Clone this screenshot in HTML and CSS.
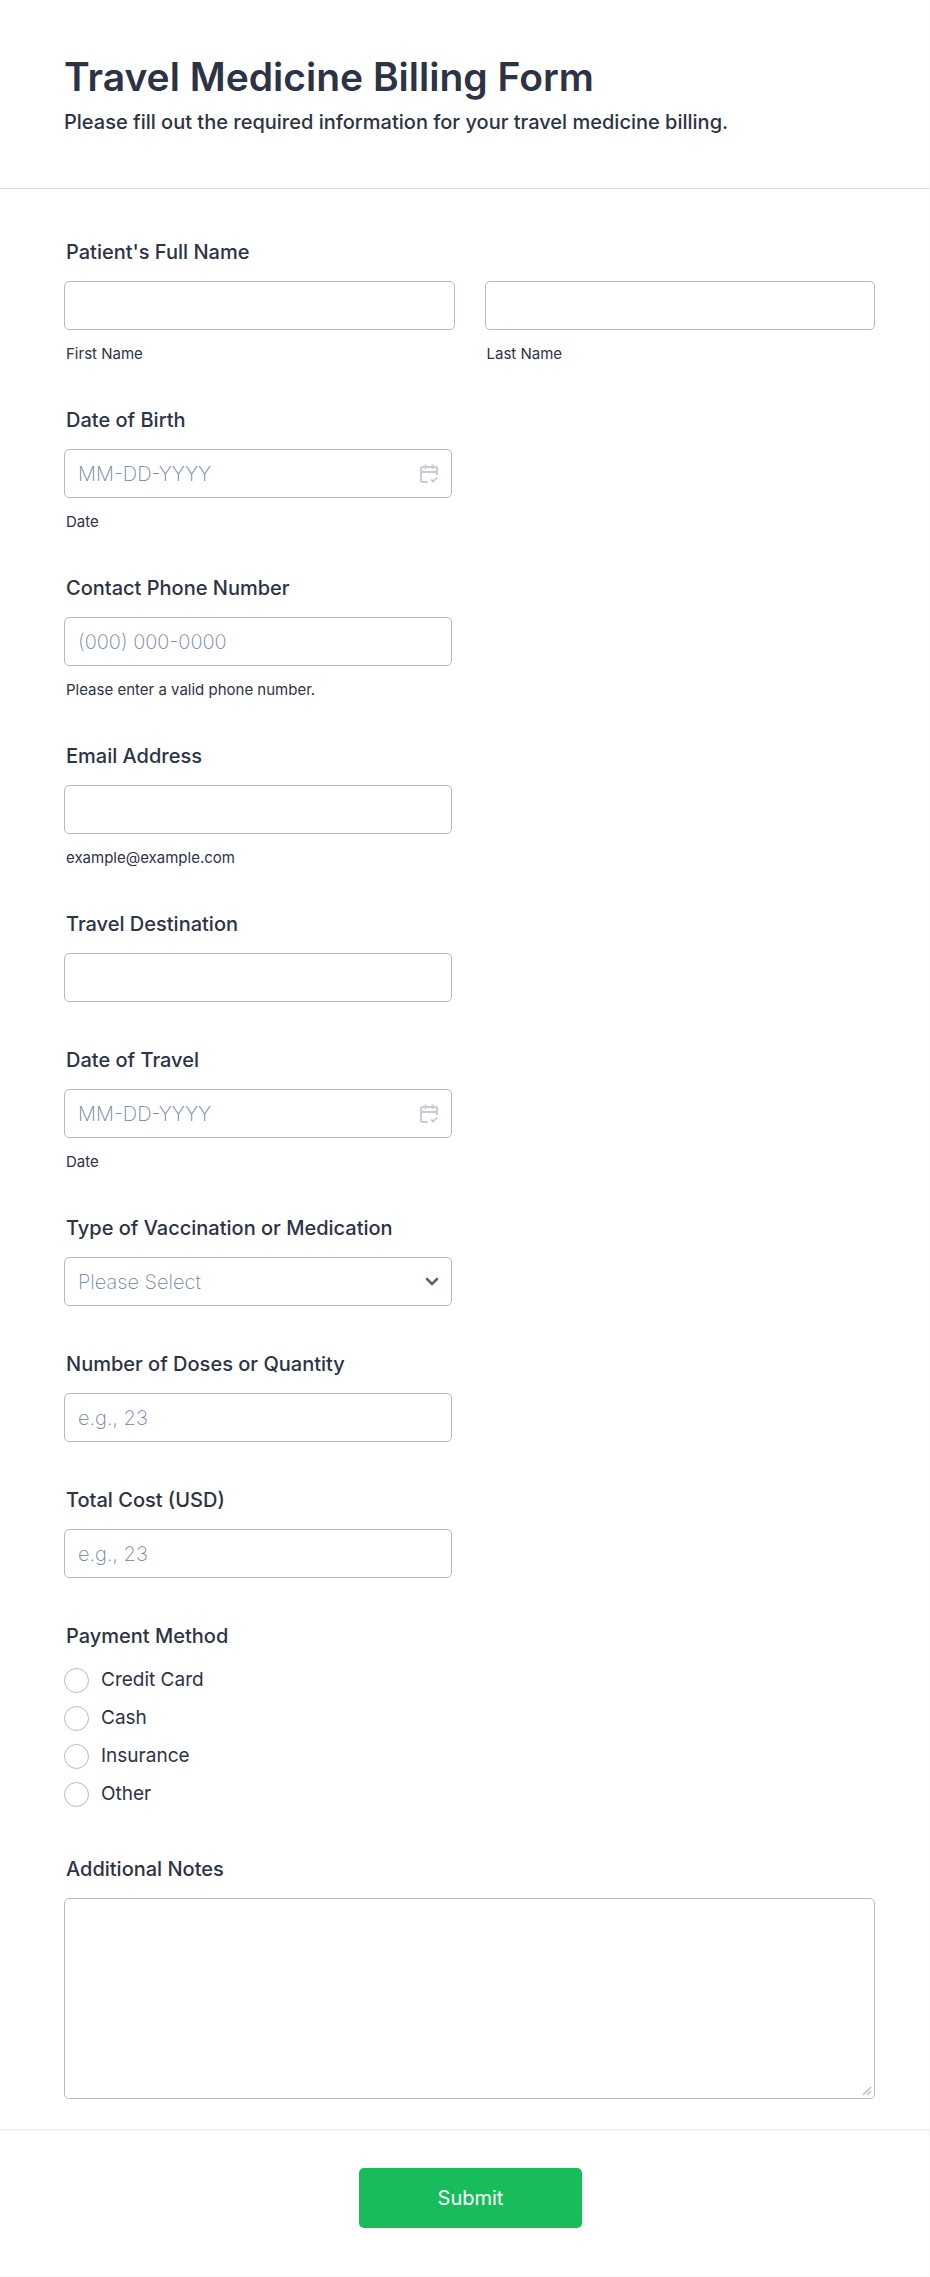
FILE: index.html
```
<!DOCTYPE html>
<html lang="en">
<head>
    <meta charset="UTF-8">
    <meta name="viewport" content="width=device-width, initial-scale=1.0">
    <title>Travel Medicine Billing Form</title>
    <link rel="stylesheet" href="styles.css">
</head>
<body>
    <form class="form">
        <header class="form-header">
            <h1>Travel Medicine Billing Form</h1>
            <p>Please fill out the required information for your travel medicine billing.</p>
        </header>
        <div class="form-body">
            <fieldset class="field">
                <legend class="label">Patient's Full Name</legend>
                <div class="name-row">
                    <div class="name-col">
                        <input class="input" type="text" id="first-name">
                        <label class="hint" for="first-name">First Name</label>
                    </div>
                    <div class="name-col">
                        <input class="input" type="text" id="last-name">
                        <label class="hint" for="last-name">Last Name</label>
                    </div>
                </div>
            </fieldset>
            <div class="field half">
                <label class="label" for="birth">Date of Birth</label>
                <div class="input date-box">
                    <input class="date-input" type="text" id="birth" placeholder="MM-DD-YYYY">
                    <button class="date-button" type="button" aria-label="Choose date of birth">
                        <svg class="calendar" viewBox="0 0 18 20" aria-hidden="true">
                            <path d="M17 11V4.500Q17 3 15.500 3H2.500Q1 3 1 4.500V16.500Q1 18 2.500 18H8M1 8H17M5.500 0.500V5M12.500 0.500V5M11 15.500L13 17.500L17 13.500"/>
                        </svg>
                    </button>
                </div>
                <label class="hint" for="birth">Date</label>
            </div>
            <div class="field half">
                <label class="label" for="phone">Contact Phone Number</label>
                <input class="input" type="tel" id="phone" placeholder="(000) 000-0000">
                <label class="hint" for="phone">Please enter a valid phone number.</label>
            </div>
            <div class="field half">
                <label class="label" for="email">Email Address</label>
                <input class="input" type="email" id="email">
                <label class="hint" for="email">example@example.com</label>
            </div>
            <div class="field half">
                <label class="label" for="destination">Travel Destination</label>
                <input class="input" type="text" id="destination">
            </div>
            <div class="field half">
                <label class="label" for="travel">Date of Travel</label>
                <div class="input date-box">
                    <input class="date-input" type="text" id="travel" placeholder="MM-DD-YYYY">
                    <button class="date-button" type="button" aria-label="Choose date of travel">
                        <svg class="calendar" viewBox="0 0 18 20" aria-hidden="true">
                            <path d="M17 11V4.500Q17 3 15.500 3H2.500Q1 3 1 4.500V16.500Q1 18 2.500 18H8M1 8H17M5.500 0.500V5M12.500 0.500V5M11 15.500L13 17.500L17 13.500"/>
                        </svg>
                    </button>
                </div>
                <label class="hint" for="travel">Date</label>
            </div>
            <div class="field half">
                <label class="label" for="vaccine">Type of Vaccination or Medication</label>
                <select class="input select" id="vaccine">
                    <option value="">Please Select</option>
                </select>
            </div>
            <div class="field half">
                <label class="label" for="doses">Number of Doses or Quantity</label>
                <input class="input" type="text" id="doses" placeholder="e.g., 23">
            </div>
            <div class="field half">
                <label class="label" for="cost">Total Cost (USD)</label>
                <input class="input" type="text" id="cost" placeholder="e.g., 23">
            </div>
            <fieldset class="field">
                <legend class="label">Payment Method</legend>
                <div class="options">
                    <label class="option"><input type="radio" name="payment" value="card">Credit Card</label>
                    <label class="option"><input type="radio" name="payment" value="cash">Cash</label>
                    <label class="option"><input type="radio" name="payment" value="insurance">Insurance</label>
                    <label class="option"><input type="radio" name="payment" value="other">Other</label>
                </div>
            </fieldset>
            <div class="field">
                <label class="label" for="notes">Additional Notes</label>
                <textarea class="input notes" id="notes"></textarea>
            </div>
        </div>
        <footer class="form-footer">
            <button class="submit" type="submit">Submit</button>
        </footer>
    </form>
</body>
</html>
```
FILE: styles.css
```
* {
    box-sizing: border-box;
}
body {
    margin: 0;
    background: #fff;
    color: #2c3345;
    font-family: Inter, sans-serif;
}
input, select, textarea, button {
    font-family: inherit;
}
.form {
    border-right: 1px solid #f7f7fa;
    border-bottom: 1px solid #f7f7fa;
}
.form-header {
    padding: 53px 55px 54px 64px;
    border-bottom: 1px solid #d7d8e4;
}
h1 {
    margin: 0 0 9px;
    font-size: 39px;
    font-weight: 600;
    line-height: 48px;
}
.form-header p {
    margin: 0;
    font-size: 20px;
    font-weight: 500;
    line-height: 24px;
}
.form-body {
    padding: 51px 54px 30px 64px;
}
.field {
    display: block;
    margin: 0 0 46px;
    padding: 0;
    border: 0;
}
.field:last-child {
    margin-bottom: 0;
}
.half {
    width: 388px;
    max-width: 100%;
}
.label {
    display: block;
    margin-bottom: 17px;
    padding: 0 2px;
    font-size: 20px;
    font-weight: 500;
    line-height: 24px;
}
.hint {
    display: block;
    margin-top: 15px;
    padding: 0 2px;
    font-size: 15px;
    line-height: 17px;
}
.input {
    display: block;
    width: 100%;
    height: 49px;
    padding: 0 13px;
    border: 1px solid #b5b9c8;
    border-radius: 5px;
    background: #fff;
    color: #2c3345;
    font-size: 20px;
}
::placeholder {
    color: #6f83a0;
    font-weight: 200;
    opacity: 1;
}
.name-row {
    display: flex;
    gap: 30px;
}
.name-col {
    flex: 1;
}
.date-box {
    display: flex;
    align-items: center;
}
.date-input {
    flex: 1;
    min-width: 0;
    padding: 0;
    border: 0;
    outline: 0;
    font-size: 20px;
}
.date-button {
    display: flex;
    padding: 0;
    border: 0;
    background: none;
    cursor: pointer;
}
.calendar {
    width: 18px;
    height: 20px;
    fill: none;
    stroke: #c8cbd9;
    stroke-width: 2;
}
.select {
    appearance: none;
    background: #fff url("data:image/svg+xml,%3Csvg xmlns='http://www.w3.org/2000/svg' width='14' height='9'%3E%3Cpath d='M2 2L7 7L12 2' fill='none' stroke='%23576376' stroke-width='2.500' stroke-linecap='round'/%3E%3C/svg%3E") no-repeat right 12px center;
    color: #6f83a0;
    font-weight: 200;
}
.options {
    display: flex;
    flex-direction: column;
    gap: 12px;
    padding: 2px 0 4px;
}
.option {
    display: flex;
    align-items: center;
    gap: 12px;
    font-size: 19px;
    line-height: 26px;
}
.option input {
    appearance: none;
    width: 25px;
    height: 25px;
    margin: 0;
    border: 1px solid #b5b9c8;
    border-radius: 50%;
}
.option input:checked {
    border: 7px solid #18bd5b;
}
.notes {
    height: 201px;
    padding: 12px 13px;
    resize: vertical;
}
.notes::-webkit-resizer {
    background: url("data:image/svg+xml,%3Csvg xmlns='http://www.w3.org/2000/svg' width='10' height='10'%3E%3Cpath d='M1 9L9 1M5 9L9 5' stroke='%23b8bdc9' stroke-width='1.500'/%3E%3C/svg%3E") no-repeat center;
}
.form-footer {
    display: flex;
    justify-content: center;
    padding: 37px 52px 48px 64px;
    border-top: 2px solid #f0f0f6;
}
.submit {
    min-width: 223px;
    height: 60px;
    border: 0;
    border-radius: 5px;
    background: #18bd5b;
    color: #fff;
    font-size: 20px;
    cursor: pointer;
}
```
